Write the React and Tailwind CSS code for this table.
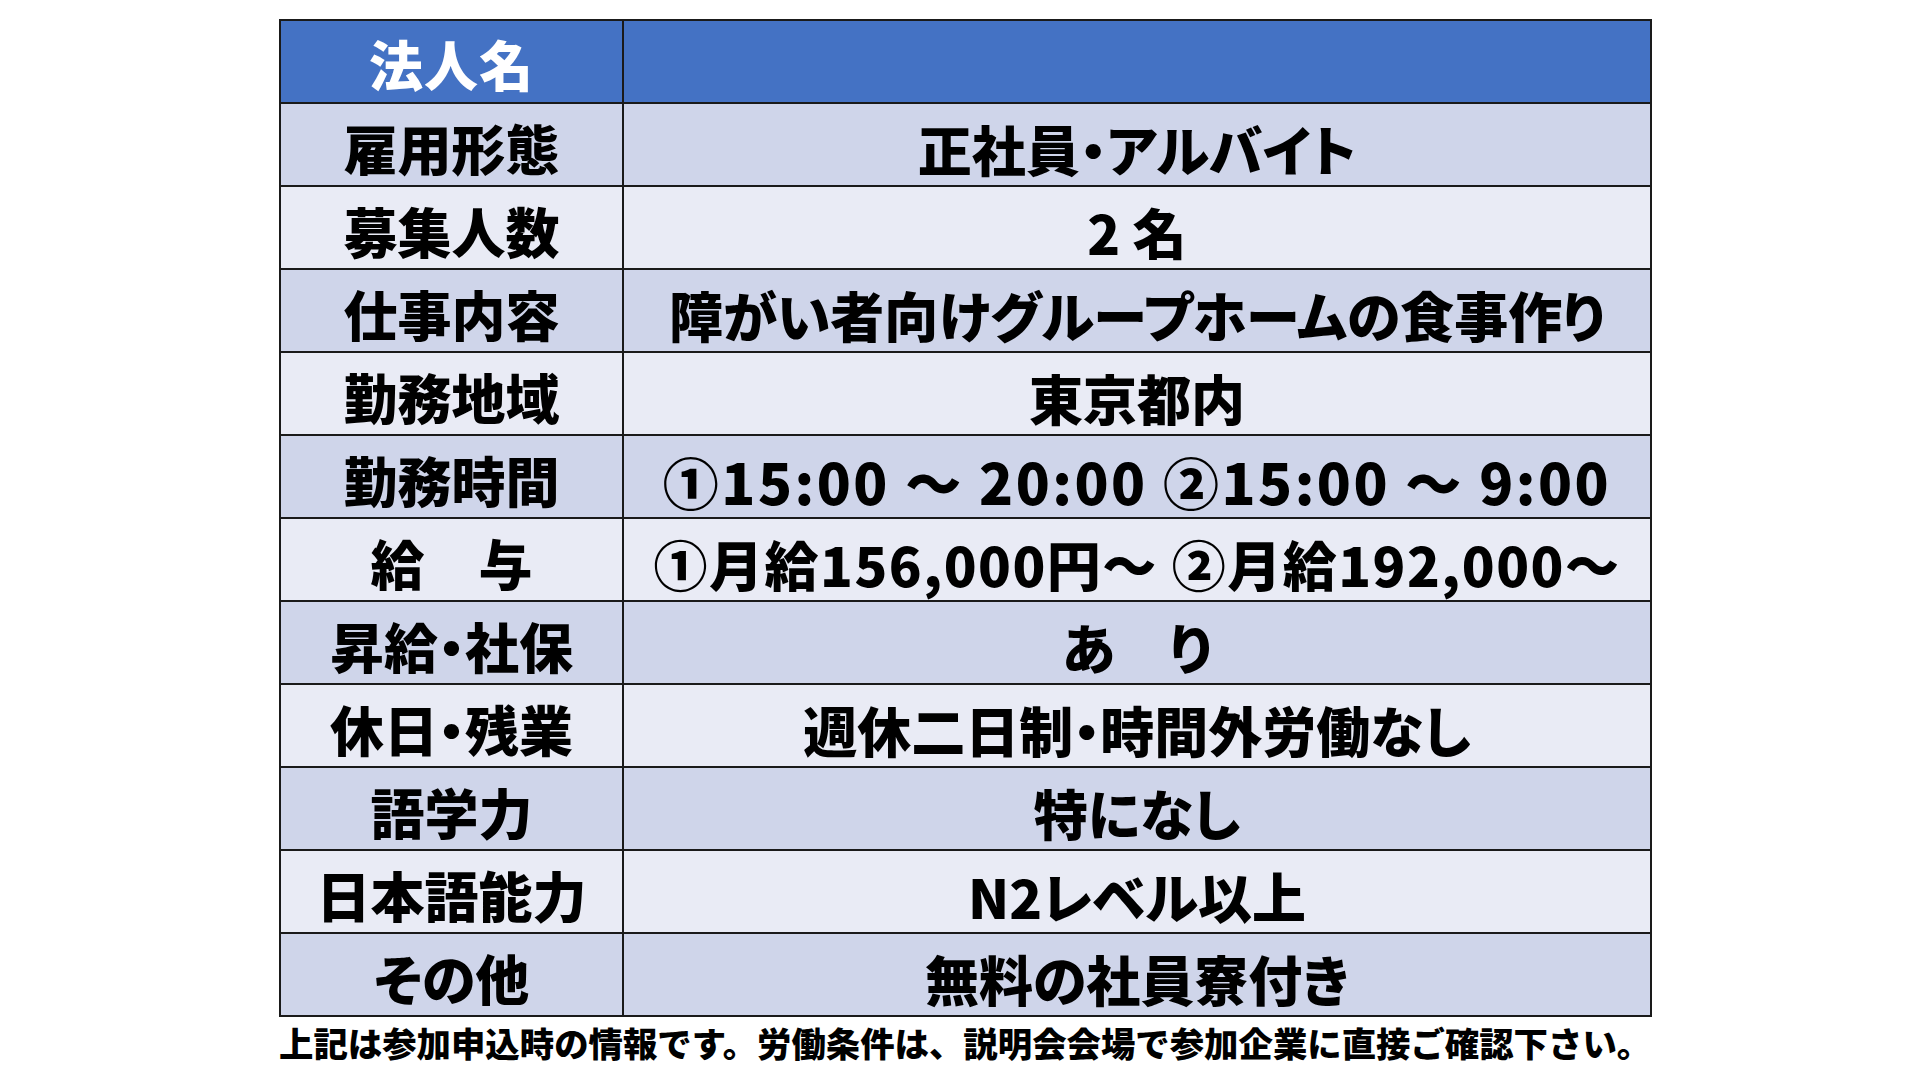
import React from 'react';

const rows = [
  { label: '雇用形態', value: '正社員・アルバイト' },
  { label: '募集人数', value: '2 名' },
  { label: '仕事内容', value: '障がい者向けグループホームの食事作り' },
  { label: '勤務地域', value: '東京都内' },
  { label: '勤務時間', value: '①15:00 ～ 20:00 ②15:00 ～ 9:00', extra: 'tracking-[2.5px] text-[56px]' },
  { label: '給　与', value: '①月給156,000円～ ②月給192,000～', extra: 'tracking-[1.5px]' },
  { label: '昇給・社保', value: 'あ　り' },
  { label: '休日・残業', value: '週休二日制・時間外労働なし' },
  { label: '語学力', value: '特になし' },
  { label: '日本語能力', value: 'N2レベル以上' },
  { label: 'その他', value: '無料の社員寮付き' },
];

const font = { fontFamily: '"Noto Sans CJK JP", "Noto Sans", sans-serif' };

export default function App() {
  return (
    <div className="w-[1920px] h-[1080px] bg-white flex flex-col items-start pl-[279px] pt-[19px] [font-feature-settings:'palt']" style={font}>
      <div className="w-[1373px] border-2 border-[#1a1a1a] bg-[#1a1a1a] grid grid-cols-[341px_1fr] gap-[2px]">
        <div className="h-[81px] bg-[#4472c4] flex items-center justify-center text-white text-[54px] font-black leading-none pt-[4px] tracking-[1px]">
          法人名
        </div>
        <div className="h-[81px] bg-[#4472c4]" />
        {rows.map((row, i) => {
          const bg = i % 2 === 0 ? 'bg-[#cfd5ea]' : 'bg-[#e9ebf5]';
          return (
            <React.Fragment key={row.label}>
              <div className={`h-[81px] ${bg} flex items-center justify-center text-black text-[54px] font-black leading-none pt-[6px] whitespace-pre`}>
                {row.label}
              </div>
              <div className={`h-[81px] ${bg} flex items-center justify-center text-black text-[54px] font-black leading-none pt-[8px] whitespace-pre ${row.extra || ''}`}>
                {row.value}
              </div>
            </React.Fragment>
          );
        })}
      </div>
      <p className="mt-[8px] text-[34.4px] font-black leading-none text-black [font-feature-settings:normal]">
        上記は参加申込時の情報です。労働条件は、説明会会場で参加企業に直接ご確認下さい。
      </p>
    </div>
  );
}
